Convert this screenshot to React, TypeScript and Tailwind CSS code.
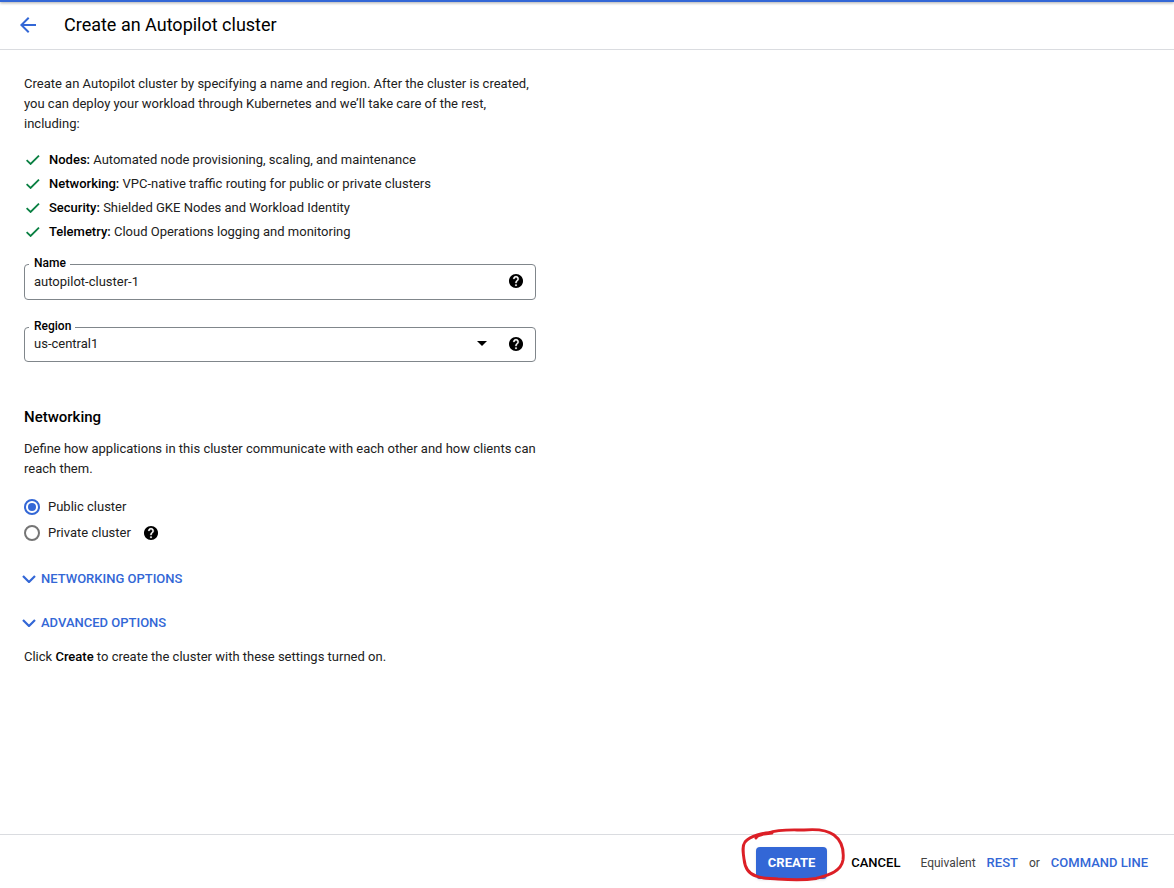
import React, { useState } from "react";

const features = [
  { name: "Nodes:", text: "Automated node provisioning, scaling, and maintenance" },
  { name: "Networking:", text: "VPC-native traffic routing for public or private clusters" },
  { name: "Security:", text: "Shielded GKE Nodes and Workload Identity" },
  { name: "Telemetry:", text: "Cloud Operations logging and monitoring" },
];

function HelpButton({ label }: { label: string }) {
  return (
    <button type="button" aria-label={label} className="size-4 shrink-0 text-black">
      <svg viewBox="0.600 0.600 22.800 22.800" className="size-4" aria-hidden="true">
        <path
          fill="currentColor"
          d="M12 2C6.480 2 2 6.480 2 12s4.480 10 10 10 10-4.480 10-10S17.520 2 12 2z"
        />
        <path
          fill="#fff"
          stroke="#fff"
          strokeWidth="0.400"
          d="M13 19h-2v-2h2v2zM15.070 11.250l-.9.920C13.450 12.900 13 13.500 13 15h-2v-.5c0-1.100.45-2.100 1.170-2.830l1.240-1.260c.37-.36.59-.86.59-1.410 0-1.100-.9-2-2-2s-2 .9-2 2H8c0-2.210 1.790-4 4-4s4 1.790 4 4c0 .88-.36 1.680-.93 2.250z"
        />
      </svg>
    </button>
  );
}

function Expander({ children }: { children: React.ReactNode }) {
  return (
    <button type="button" className="-ml-0.5 flex h-5 items-center gap-[5px] font-medium text-[#3367d6]">
      <svg viewBox="0 0 14 8" className="h-2 w-3.5" fill="none" stroke="currentColor" strokeWidth="2.200" aria-hidden="true">
        <path d="M1 1l6 6 6-6" />
      </svg>
      {children}
    </button>
  );
}

export default function App() {
  const [name, setName] = useState("autopilot-cluster-1");
  const [access, setAccess] = useState("public");
  const radio =
    "size-4 shrink-0 appearance-none rounded-full border-2 border-[#757575] bg-clip-content p-0.5 checked:border-[#3367d6] checked:bg-[#3367d6]";

  return (
    <div className="flex min-h-screen flex-col bg-white font-['Roboto',sans-serif] text-[13px] leading-5 text-[#212121]">
      <div className="h-0.5 bg-[#3367d6] shadow-[0_1px_3px_rgba(0,0,0,0.4)]" />
      <header className="flex h-12 items-center gap-7 border-b border-[#dadce0] px-5 pb-0.5">
        <button type="button" aria-label="Back" className="text-[#3367d6]">
          <svg viewBox="4 4 16 16" className="size-4" fill="currentColor" aria-hidden="true">
            <path d="M20 11H7.830l5.590-5.590L12 4l-8 8 8 8 1.410-1.410L7.830 13H20v-2z" />
          </svg>
        </button>
        <h1 className="text-lg text-black">Create an Autopilot cluster</h1>
      </header>

      <main className="w-full max-w-[560px] grow px-6 pt-6">
        <p>
          Create an Autopilot cluster by specifying a name and region. After the cluster is created, you can deploy
          your workload through Kubernetes and we’ll take care of the rest, including:
        </p>
        <ul className="mt-3.5">
          {features.map((f) => (
            <li key={f.name} className="flex h-6 items-center gap-[9px] pl-0.5">
              <svg viewBox="0 0 14 10" className="h-2.5 w-3.5" fill="none" stroke="#0b8043" strokeWidth="1.800" aria-hidden="true">
                <path d="M0.600 5.200L4.600 9 13 0.600" />
              </svg>
              <span>
                <b className="font-medium text-black">{f.name}</b> {f.text}
              </span>
            </li>
          ))}
        </ul>

        <div className="relative mt-5 flex h-9 items-center rounded border border-[#80868b] pr-[11px] pb-0.5">
          <label htmlFor="name" className="absolute -top-2.5 left-1 bg-white pr-1 pl-[5px] text-xs leading-4 font-medium text-black">
            Name
          </label>
          <input
            id="name"
            value={name}
            onChange={(e) => setName(e.target.value)}
            className="h-full min-w-0 grow bg-transparent pl-[9px] outline-none"
          />
          <HelpButton label="Help for name" />
        </div>

        <div className="relative mt-[27px] flex h-[35px] items-center rounded border border-[#80868b] pr-[11px] pb-0.5">
          <label htmlFor="region" className="absolute -top-2.5 left-1 bg-white pr-1 pl-[5px] text-xs leading-4 font-medium text-black">
            Region
          </label>
          <select id="region" className="h-full min-w-0 grow appearance-none bg-transparent pl-[9px] outline-none">
            <option>us-central1</option>
          </select>
          <svg viewBox="0 0 10 5" className="mr-[21px] h-[5px] w-2.5 shrink-0" aria-hidden="true">
            <path d="M0 0h10L5 5z" fill="#000" />
          </svg>
          <HelpButton label="Help for region" />
        </div>

        <h2 className="mt-[45px] text-[15px] font-medium text-black">Networking</h2>
        <p className="mt-3">
          Define how applications in this cluster communicate with each other and how clients can reach them.
        </p>
        <div className="mt-[15px] flex flex-col">
          <label className="flex h-[26px] items-center gap-2">
            <input type="radio" name="access" className={radio} checked={access === "public"} onChange={() => setAccess("public")} />
            Public cluster
          </label>
          <div className="flex h-[26px] items-center gap-3">
            <label className="flex items-center gap-2">
              <input type="radio" name="access" className={radio} checked={access === "private"} onChange={() => setAccess("private")} />
              Private cluster
            </label>
            <HelpButton label="Help for private cluster" />
          </div>
        </div>

        <div className="mt-[23px] flex flex-col items-start gap-6">
          <Expander>NETWORKING OPTIONS</Expander>
          <Expander>ADVANCED OPTIONS</Expander>
        </div>
        <p className="mt-3.5">
          Click <b className="font-medium text-black">Create</b> to create the cluster with these settings turned on.
        </p>
      </main>

      <footer className="flex h-[54px] items-center justify-end border-t border-[#dadce0] pt-0.5 pr-[26px]">
        <div className="relative">
          <button type="button" className="h-8 rounded-sm bg-[#3367d6] px-3 font-bold text-white shadow-sm">
            CREATE
          </button>
          <svg viewBox="0 0 106 56" className="pointer-events-none absolute -top-5 -left-4 h-14 w-[106px] max-w-none" fill="none" stroke="#dc1f26" strokeWidth="2.900" strokeLinecap="round" strokeLinejoin="round" aria-hidden="true">
            <path d="M16 11C16 8 22 7 32 6M32 6C24 5 10 9 5 15C2 19 3 25 4 32C5 42 9 47 16 49C22 52 30 51 38 52C52 53 66 53 76 51.500C88 48 101 45 103 33C104 24 102 14 94 8C86 2 75 2 64 3C50 3 39 2 28 6C22 8 17 8 16 11" />
          </svg>
        </div>
        <button type="button" className="ml-6 font-medium text-black">CANCEL</button>
        <span className="ml-5 text-xs text-[#424242]">Equivalent</span>
        <a href="#rest" className="ml-[11px] font-medium text-[#3367d6]">REST</a>
        <span className="ml-[11px] text-xs text-[#424242]">or</span>
        <a href="#command-line" className="ml-[11px] font-medium text-[#3367d6]">COMMAND LINE</a>
      </footer>
    </div>
  );
}
